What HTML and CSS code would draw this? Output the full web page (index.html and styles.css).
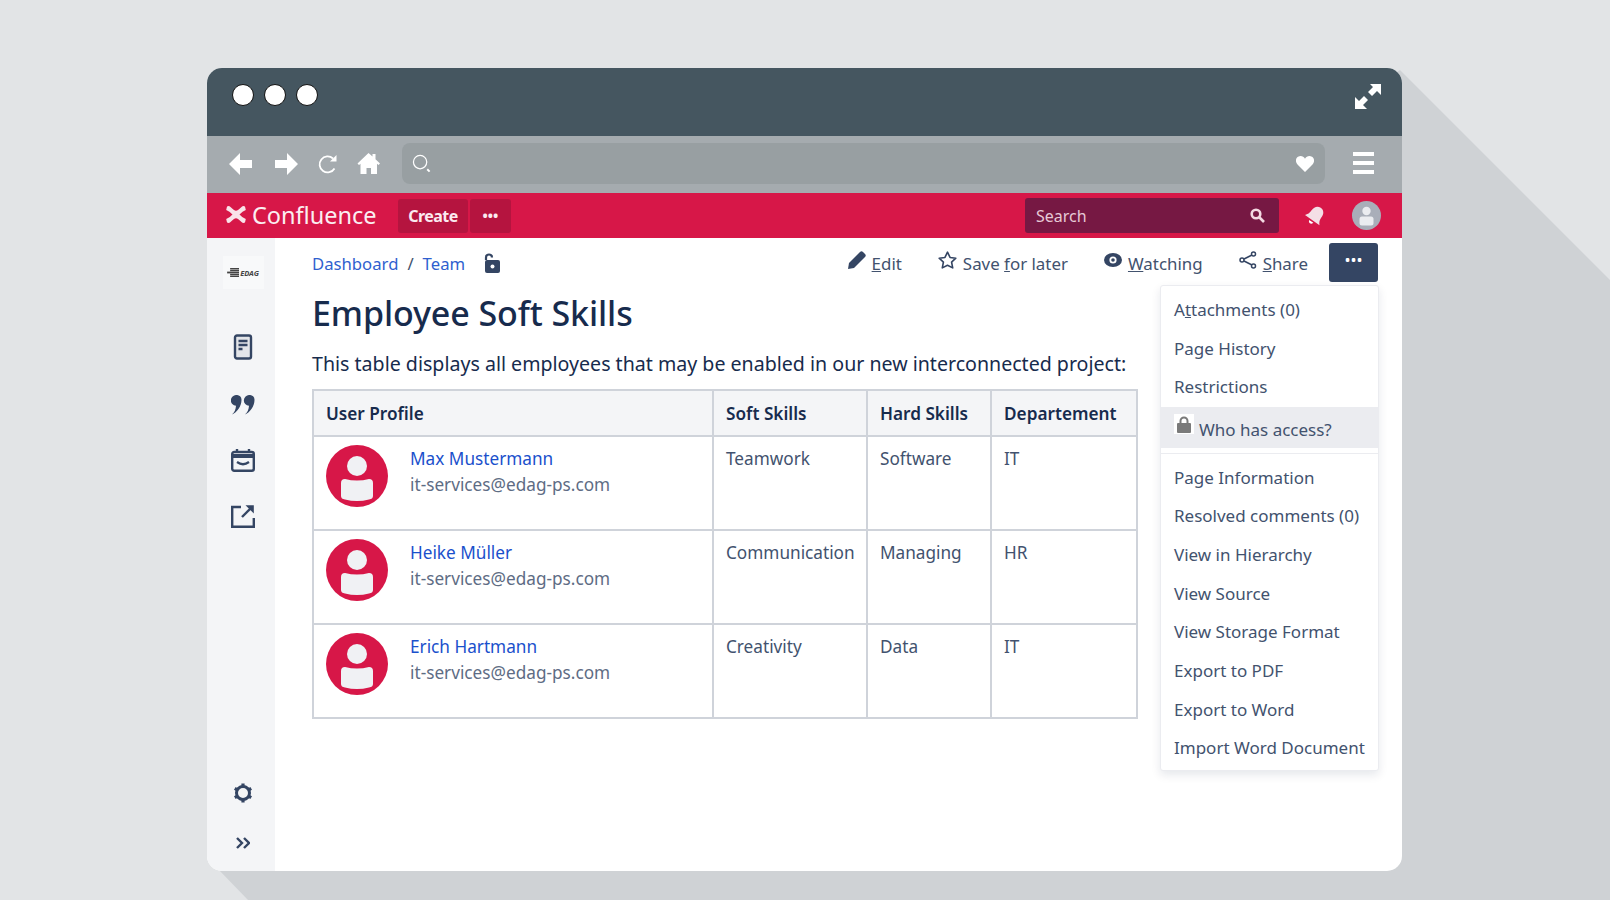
FILE: index.html
```html
<!DOCTYPE html>
<html lang="en">
<head>
  <meta charset="UTF-8">
  <title>Employee Soft Skills - Confluence</title>
  <link rel="stylesheet" href="styles.css">
</head>
<body>
  <svg class="defs" width="0" height="0">
    <symbol id="person" viewBox="0 0 62 62">
      <circle cx="31" cy="31" r="31" fill="#d71748"/>
      <circle cx="31" cy="21" r="10" fill="#f0f1f4"/>
      <path d="M15 38q0-4 4-4q12 3 24 0q4 0 4 4v13q0 3-4 3.500q-12 3-24 0q-4-.5-4-3.500z" fill="#f0f1f4"/>
    </symbol>
  </svg>

  <!-- long shadow behind the window -->
  <div class="long-shadow"></div>

  <div class="window">
    <div class="titlebar">
      <div class="dots">
        <span class="dot"></span>
        <span class="dot"></span>
        <span class="dot"></span>
      </div>
      <svg class="expand" viewBox="0 0 26 26" width="26" height="26" fill="#fff">
        <path d="M15 1h11v11l-4-4-5 5-4-4 5-5zM0 14l4 4 5-5 4 4-5 5 4 4H0z"/>
      </svg>
    </div>

    <div class="toolbar">
      <svg class="nav-icon" viewBox="0 0 23 22" width="23" height="22" fill="#fff"><path d="M0 11L11 0v7h12v8H11v7z"/></svg>
      <svg class="nav-icon fwd" viewBox="0 0 23 22" width="23" height="22" fill="#fff"><path d="M23 11L12 0v7H0v8h12v7z"/></svg>
      <svg class="nav-icon reload" viewBox="0 0 21 20" width="21" height="20" fill="none" stroke="#fff" stroke-width="1.800"><path d="M16.500 14.500A8 8 0 1 1 15 4.500"/><path d="M18.500 1v6.500h-6.500z" fill="#fff" stroke="none"/></svg>
      <svg class="nav-icon home" viewBox="0 0 23 21" width="23" height="21" fill="#fff"><path d="M11.500 0l4 3.600V1h3v5.300L23 10.500l-1.500 1.500-1.500-1.300V21h-6v-6H9.500v6h-6V10.700L2 12 .5 10.500z"/></svg>
      <div class="urlbar">
        <svg viewBox="0 0 21 21" width="20" height="20" fill="none" stroke="#fff"><circle cx="8.500" cy="8.500" r="7" stroke-width="1.300"/><path d="M16 16l2.500 2.500" stroke-width="2"/></svg>
        <svg viewBox="0 0 18 16" width="18" height="16" fill="#fff"><path d="M9 16L1.500 8.500C-1 6-.3 2 2 .8 4.500-.5 7.500 0 9 2.800 10.500 0 13.500-.5 16 .8c2.300 1.200 3 5.200.5 7.700z"/></svg>
      </div>
      <div class="hamburger"><span></span><span></span><span></span></div>
    </div>

    <div class="appbar">
      <div class="logo">
        <svg viewBox="0 0 20 17" width="20" height="17" fill="#f9e3e9"><path d="M1 .5Q3-.5 4.500 1 8 4.500 10 4.800 12 4.500 15.500 1 17-.5 19 .5l.8 3.500Q16.500 5 13.500 8.500 16.500 12 19.800 13L19 16.500Q17 17.500 15.500 16 12 12.500 10 12.200 8 12.500 4.500 16 3 17.500 1 16.500L.2 13Q3.500 12 6.500 8.500 3.500 5 .2 4z"/></svg>
        <span>Confluence</span>
      </div>
      <button class="bar-btn create">Create</button>
      <button class="bar-btn more">&bull;&bull;&bull;</button>
      <div class="search">
        <span>Search</span>
        <svg viewBox="0 0 15 15" width="15" height="15" fill="none" stroke="#f3d9e2"><circle cx="6" cy="6" r="4.300" stroke-width="2.600"/><path d="M9.500 9.500l4.500 4.500" stroke-width="2.600"/></svg>
      </div>
      <svg class="bell" viewBox="0 0 20 20" width="20" height="20" fill="#f4dfe6"><g transform="rotate(35 10 10)"><path d="M10 0c4 0 6 3 6 7 0 4 1 6 3 8H1c2-2 3-4 3-8 0-4 2-7 6-7z"/><path d="M7.500 16.500h5q-.5 2.500-2.500 2.500t-2.500-2.500z" fill="#fff"/></g></svg>
      <div class="bar-avatar">
        <svg viewBox="0 0 29 29" width="29" height="29"><circle cx="14.500" cy="14.500" r="14.500" fill="#a9aeb9"/><circle cx="14.500" cy="10" r="4.200" fill="#ebecf0"/><rect x="7.500" y="15.500" width="14" height="9" rx="2.500" fill="#ebecf0"/></svg>
      </div>
    </div>

    <div class="body">
      <aside class="sidebar">
        <div class="space-logo">
          <span class="stripes"></span><span class="edag">EDAG</span>
        </div>
        <svg class="side-icon page-icon" viewBox="0 0 24 26" width="24" height="26" fill="none" stroke="#344563" stroke-width="2.400"><rect x="4" y="1.500" width="16" height="23" rx="2" fill="#e3e5e9"/><path d="M7.500 7h9M7.500 11h9M7.500 15h4"/></svg>
        <svg class="side-icon quote-icon" viewBox="0 0 24 20" width="24" height="20" fill="#344563"><path d="M5.500 0a4.700 4.700 0 0 1 5 5C10.500 11 6 17.500 1 19.500c2.500-2.300 3.800-5 4-8.700A5.300 5.300 0 0 1 5.500 0zM18.500 0a4.700 4.700 0 0 1 5 5C23.500 11 19 17.500 14 19.500c2.500-2.300 3.800-5 4-8.700A5.300 5.300 0 0 1 18.500 0z"/></svg>
        <svg class="side-icon cal-icon" viewBox="0 0 24 24" width="24" height="24" fill="none" stroke="#344563"><rect x="1.200" y="4" width="21.600" height="18.800" rx="2" stroke-width="2.400"/><path d="M1 6h22v4H1z" fill="#344563" stroke="none"/><path d="M6 1v4M18 1v4" stroke-width="2.400"/><path d="M6 14q6 4.500 12 0" stroke-width="2.200"/></svg>
        <svg class="side-icon link-icon" viewBox="0 0 24 24" width="24" height="24" fill="none" stroke="#344563" stroke-width="2.400"><path d="M10 3H1.200v19.800H22.800V14"/><path d="M11 13l10-10"/><path d="M14.500 1.200h8.300v8.300z" fill="#344563" stroke="none"/></svg>
        <svg class="side-icon gear" viewBox="0 0 20 20" width="20" height="20" fill="none" stroke="#344563"><circle cx="10" cy="10" r="6.500" stroke-width="3"/><path d="M10 .5v3M10 16.500v3M1.800 5.300l2.600 1.500M15.600 13.200l2.600 1.500M1.800 14.700l2.600-1.500M15.600 6.800l2.600-1.500" stroke-width="3.200"/></svg>
        <svg class="side-icon collapse" viewBox="0 0 14 12" width="14" height="12" fill="none" stroke="#344563" stroke-width="2.400"><path d="M1 1l5 5-5 5M8 1l5 5-5 5"/></svg>
      </aside>

      <main class="content">
        <div class="page-head">
          <nav class="crumbs">
            <a href="#">Dashboard</a>
            <span class="slash">/</span>
            <a href="#">Team</a>
            <svg class="lock-open" viewBox="0 0 16 20" width="16" height="20"><path d="M2 7V4.500a3 3 0 0 1 6 0" fill="none" stroke="#344563" stroke-width="2.200"/><rect x="1" y="7" width="15" height="13" rx="2" fill="#344563"/><circle cx="8.500" cy="13.500" r="2" fill="#fff"/></svg>
          </nav>
          <div class="actions">
            <a class="action" href="#">
              <svg viewBox="0 0 18 18" width="18" height="18" fill="#344563"><path d="M0 18l1-6L12 1q1.500-1.500 3 0l2 2q1.500 1.500 0 3L6 17z"/></svg>
              <span><u>E</u>dit</span>
            </a>
            <a class="action" href="#">
              <svg viewBox="0 0 20 19" width="19" height="18" fill="none" stroke="#344563" stroke-width="1.700" stroke-linejoin="round"><path d="M10 1.200l2.700 5.600 6.100.8-4.500 4.200 1.200 6L10 15l-5.500 2.800 1.200-6L1.200 7.600l6.100-.8z"/></svg>
              <span>Save <u>f</u>or later</span>
            </a>
            <a class="action" href="#">
              <svg viewBox="0 0 18 14" width="18" height="14"><ellipse cx="9" cy="7" rx="9" ry="7" fill="#344563"/><circle cx="9" cy="7" r="3.600" fill="#fff"/><circle cx="9" cy="7" r="1.800" fill="#344563"/></svg>
              <span><u>W</u>atching</span>
            </a>
            <a class="action" href="#">
              <svg viewBox="0 0 18 18" width="18" height="18" fill="none" stroke="#344563" stroke-width="1.500"><circle cx="14.500" cy="3" r="2"/><circle cx="3" cy="9" r="2"/><circle cx="14.500" cy="15" r="2"/><path d="M5 8l8-4M5 10l8 4"/></svg>
              <span><u>S</u>hare</span>
            </a>
            <button class="menu-btn">&bull;&bull;&bull;</button>
          </div>
        </div>

        <h1>Employee Soft Skills</h1>
        <p class="intro">This table displays all employees that may be enabled in our new interconnected project:</p>

        <table class="skills">
          <thead>
            <tr>
              <th class="c-user">User Profile</th>
              <th class="c-soft">Soft Skills</th>
              <th class="c-hard">Hard Skills</th>
              <th class="c-dept">Departement</th>
            </tr>
          </thead>
          <tbody>
            <tr>
              <td>
                <div class="profile">
                  <svg class="avatar" width="62" height="62"><use href="#person"/></svg>
                  <div>
                    <a class="name" href="#">Max Mustermann</a>
                    <div class="mail">it-services@edag-ps.com</div>
                  </div>
                </div>
              </td>
              <td>Teamwork</td>
              <td>Software</td>
              <td>IT</td>
            </tr>
            <tr>
              <td>
                <div class="profile">
                  <svg class="avatar" width="62" height="62"><use href="#person"/></svg>
                  <div>
                    <a class="name" href="#">Heike Müller</a>
                    <div class="mail">it-services@edag-ps.com</div>
                  </div>
                </div>
              </td>
              <td>Communication</td>
              <td>Managing</td>
              <td>HR</td>
            </tr>
            <tr>
              <td>
                <div class="profile">
                  <svg class="avatar" width="62" height="62"><use href="#person"/></svg>
                  <div>
                    <a class="name" href="#">Erich Hartmann</a>
                    <div class="mail">it-services@edag-ps.com</div>
                  </div>
                </div>
              </td>
              <td>Creativity</td>
              <td>Data</td>
              <td>IT</td>
            </tr>
          </tbody>
        </table>

        <!-- dropdown of the ... button -->
        <div class="dropdown">
          <ul class="first">
            <li>A<u>t</u>tachments (0)</li>
            <li>Page History</li>
            <li>Restrictions</li>
            <li class="active">
              <span class="lock-tile">
                <svg viewBox="0 0 14 17" width="14" height="17"><path d="M3.500 8V5a3.500 3.500 0 0 1 7 0v3" fill="none" stroke="#7a7a7a" stroke-width="2"/><rect x="0" y="7" width="14" height="10" rx="1" fill="#7a7a7a"/></svg>
              </span>
              <span class="active-label">Who has access?</span>
            </li>
          </ul>
          <ul class="second">
            <li>Page Information</li>
            <li>Resolved comments (0)</li>
            <li>View in Hierarchy</li>
            <li>View Source</li>
            <li>View Storage Format</li>
            <li>Export to PDF</li>
            <li>Export to Word</li>
            <li>Import Word Document</li>
          </ul>
        </div>
      </main>
    </div>
  </div>
</body>
</html>
```

FILE: styles.css
```css
* {
  box-sizing: border-box;
  margin: 0;
  padding: 0;
}
html, body {
  height: 900px;
  overflow: hidden;
}
body {
  background-color: #e2e4e6;
  font-family: "Noto Sans", "Open Sans", sans-serif;
  color: #172b4d;
  padding: 68px 0 0 207px;
}
a {
  text-decoration: none;
}
button {
  font-family: inherit;
  border: none;
}
.defs {
  position: absolute;
}
.long-shadow {
  position: absolute;
  inset: 0;
  background: #cfd2d5;
  clip-path: polygon(1400px 70px, 1610px 280px, 1610px 900px, 248px 900px, 218px 869px);
}

/* browser window */
.window {
  position: relative;
  width: 1195px;
  height: 803px;
  border-radius: 15px;
  overflow: hidden;
  background: #fff;
}
.titlebar {
  height: 68px;
  background: #455660;
  display: flex;
  align-items: flex-start;
  justify-content: space-between;
  padding: 16px 21px 0 25px;
}
.dots {
  display: flex;
  gap: 10px;
}
.dot {
  width: 22px;
  height: 22px;
  border-radius: 50%;
  background: #fff;
  border: 1px solid #111;
}
.expand {
  margin-top: -1px;
}
.toolbar {
  height: 57px;
  background: #a5abaf;
  display: flex;
  align-items: center;
  padding-left: 22px;
  padding-bottom: 2px;
}
.nav-icon.fwd {
  margin-left: 23px;
}
.nav-icon.reload {
  margin-left: 20px;
}
.nav-icon.home {
  margin-left: 18px;
}
.urlbar {
  width: 923px;
  height: 41px;
  margin-left: 22px;
  border-radius: 8px;
  background: #989fa2;
  display: flex;
  align-items: center;
  justify-content: space-between;
  padding: 0 11px 0 10px;
}
.hamburger {
  margin-left: 28px;
  margin-bottom: 2px;
  width: 21px;
  display: flex;
  flex-direction: column;
  gap: 5px;
}
.hamburger span {
  height: 4px;
  background: #fff;
}
.appbar {
  height: 45px;
  background: #d71748;
  display: flex;
  align-items: center;
  padding-left: 19px;
}
.logo {
  display: flex;
  align-items: center;
  gap: 6px;
  color: #fbeef1;
  font-size: 23.500px;
  line-height: 30px;
  padding-bottom: 2px;
  width: 172px;
}
.bar-btn {
  height: 34px;
  background: #b5143f;
  color: #fbeaf0;
  font-size: 16px;
  font-weight: 700;
  border-radius: 3px;
}
.bar-btn.create {
  width: 70px;
  letter-spacing: -0.5px;
}
.bar-btn.more {
  width: 41px;
  margin-left: 2px;
  font-size: 14px;
  letter-spacing: 0;
}
.search {
  width: 254px;
  height: 35px;
  margin-left: 514px;
  background: #761843;
  border-radius: 3px;
  display: flex;
  align-items: center;
  justify-content: space-between;
  padding: 0 14px 0 11px;
  color: #e6c9d6;
  font-size: 16px;
}
.bell {
  margin-left: 26px;
}
.bar-avatar {
  margin-left: 27px;
  height: 29px;
}

/* window body */
.body {
  display: flex;
  height: 633px;
}
.sidebar {
  width: 68px;
  background: #f4f5f7;
  display: flex;
  flex-direction: column;
  align-items: center;
  padding: 18px 0 0 4px;
}
.space-logo {
  width: 41px;
  height: 33px;
  background: #f8f9fa;
  display: flex;
  align-items: center;
  justify-content: center;
  gap: 1px;
}
.stripes {
  width: 12px;
  height: 9px;
  background: repeating-linear-gradient(#444 0 1px, #999 1px 2px);
  clip-path: polygon(0 35%, 25% 35%, 25% 0, 100% 0, 100% 100%, 25% 100%, 25% 65%, 0 65%);
}
.edag {
  font-size: 7.500px;
  font-weight: 700;
  font-style: italic;
  color: #444;
}
.page-icon {
  margin-top: 45px;
}
.quote-icon {
  margin-top: 35px;
}
.cal-icon {
  margin-top: 33px;
}
.link-icon {
  margin-top: 32px;
}
.side-icon.gear {
  margin-top: auto;
}
.side-icon.collapse {
  margin-top: 34px;
  margin-bottom: 22px;
}
.content {
  position: relative;
  flex: 1;
  padding: 5px 24px 0 37px;
}
.page-head {
  display: flex;
  justify-content: space-between;
  align-items: center;
  height: 39px;
}
.crumbs {
  display: flex;
  align-items: center;
  font-size: 16.700px;
  padding-top: 1px;
}
.crumbs a {
  color: #2f5fcf;
}
.slash {
  margin: 0 9px;
  color: #42526e;
}
.lock-open {
  margin-left: 19px;
}
.actions {
  display: flex;
  align-items: center;
}
.action {
  display: flex;
  align-items: center;
  gap: 6px;
  color: #42526e;
  font-size: 16.900px;
  margin-right: 36px;
}
.action span {
  padding-top: 2px;
}
.action svg {
  margin-top: -5px;
}
.action:nth-child(4) {
  margin-right: 21px;
}
.menu-btn {
  width: 49px;
  height: 39px;
  background: #344563;
  color: #fff;
  border-radius: 3px;
  font-size: 16px;
  padding-bottom: 5px;
}
h1 {
  font-size: 34px;
  font-weight: 500;
  line-height: 44px;
  margin-top: 9px;
  letter-spacing: -0.1px;
}
.intro {
  font-size: 19.600px;
  line-height: 28px;
  margin-top: 15px;
}

/* table */
.skills {
  width: 824px;
  margin-top: 11px;
  border-collapse: collapse;
  table-layout: fixed;
  font-size: 17.200px;
  color: #42526e;
}
.skills th, .skills td {
  border: 2px solid #cfd3da;
  padding: 0 12px;
  text-align: left;
}
.skills th {
  height: 46px;
  background: #f4f5f7;
  color: #172b4d;
  font-weight: 600;
}
.skills td {
  height: 94px;
  vertical-align: top;
  line-height: 26px;
  padding-top: 9px;
}
.c-user { width: 400px; }
.c-soft { width: 154px; }
.c-hard { width: 124px; }
.c-dept { width: 146px; }
.profile {
  display: flex;
  gap: 22px;
}
.avatar {
  flex: none;
  margin-top: -1px;
}
.name {
  color: #1a50cc;
}
.mail {
  color: #5e6c84;
}

/* dropdown */
.dropdown {
  position: absolute;
  top: 47px;
  right: 23px;
  width: 219px;
  height: 486px;
  background: #fff;
  border: 1px solid #ebecf0;
  border-radius: 3px;
  box-shadow: 0 4px 10px rgba(9, 30, 66, 0.1);
  font-size: 17px;
  color: #42526e;
}
.dropdown ul {
  list-style: none;
}
.dropdown li {
  height: 38.700px;
  line-height: 38.700px;
  padding-left: 13px;
  white-space: nowrap;
}
.first {
  padding-top: 5px;
}
.dropdown li.active {
  height: 41px;
  line-height: 41px;
  background: #ebecf0;
  display: flex;
  align-items: center;
  gap: 5px;
}
.active-label {
  padding-top: 3px;
}
.lock-tile {
  width: 20px;
  height: 20px;
  background: #fff;
  display: flex;
  justify-content: center;
  align-items: center;
  margin-top: -7px;
}
.second {
  margin-top: 5px;
  border-top: 1px solid #ebecf0;
  padding-top: 4.500px;
}
```
